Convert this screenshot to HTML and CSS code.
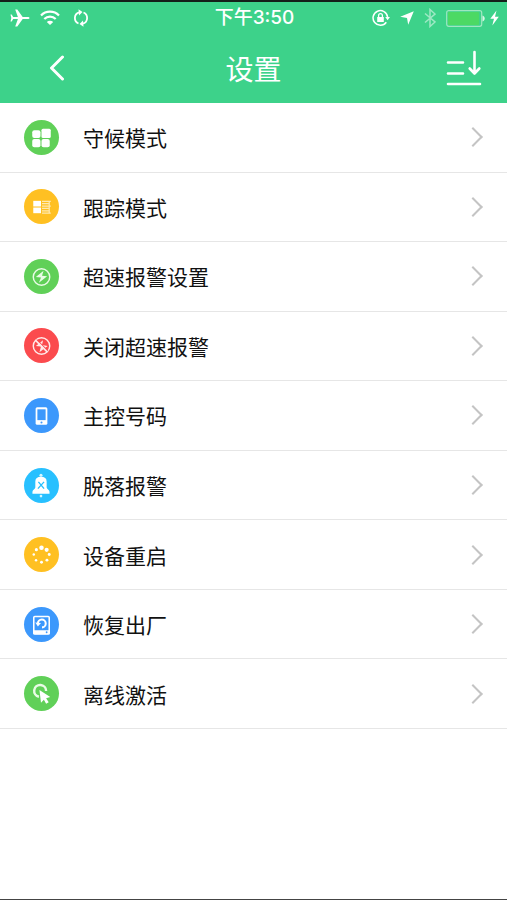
FILE: index.html
```html
<!DOCTYPE html>
<html lang="zh-CN">
<head>
  <meta charset="UTF-8" />
  <title>设置</title>
  <meta name="viewport" content="width=device-width, initial-scale=1.0"/>
  <link rel="stylesheet" href="styles.css">
</head>
<body>

<header class="header">
  <div class="status-bar">
    <div class="status-left">
      <!-- airplane -->
      <svg width="20" height="18" viewBox="0 0 20 18" fill="#fff"><path d="M19.500 9C19.500 8.200 18.700 8 17.800 8H12.700L7.300 .5H5.200L7.900 8H3.200L1.700 5.500H.5L1.300 9L.5 12.500H1.700L3.200 10H7.900L5.200 17.500H7.300L12.700 10H17.800C18.700 10 19.500 9.800 19.500 9Z"/></svg>
      <!-- wifi -->
      <svg width="20" height="16" viewBox="0 0 20 16" fill="none" stroke="#fff" stroke-width="2.200"><path d="M1 5.500A12.500 12.500 0 0 1 19 5.500"/><path d="M4.300 9A8 8 0 0 1 15.700 9"/><path d="M6.800 12A4.500 4.500 0 0 1 13.200 12L10 15Z" fill="#fff" stroke="none"/></svg>
      <!-- sync -->
      <svg class="sync" width="16" height="18" viewBox="0 0 16 18" fill="none" stroke="#fff" stroke-width="1.800"><path d="M6 3.300A6 6 0 0 0 5.500 14.500"/><path d="M10 14.700A6 6 0 0 0 10.500 3.500"/><path d="M5.500 .3L9.500 3L6 6.500ZM10.500 17.700L6.500 15L10 11.500Z" fill="#fff" stroke="none"/></svg>
    </div>
    <time class="clock">下午3:50</time>
    <div class="status-right">
      <!-- rotation lock -->
      <svg width="18" height="18" viewBox="0 0 18 18" fill="none" stroke="#fff" stroke-width="1.500"><path d="M15.600 8A7.300 7.300 0 1 0 14.300 13.200"/><path d="M13.200 8H18L15.600 11.300Z" fill="#fff" stroke="none"/><rect x="5.200" y="8" width="6.600" height="5" fill="#fff" stroke="none"/><path d="M6.600 8V6.600A1.900 1.900 0 0 1 10.400 6.600V8" stroke-width="1.300"/></svg>
      <!-- location -->
      <svg width="14" height="14" viewBox="0 0 14 14" fill="#fff"><path d="M13.800 .2L8.200 13.800L7 7L.2 5.800Z"/></svg>
      <!-- bluetooth -->
      <svg class="dim" width="12" height="20" viewBox="0 0 12 20" fill="none" stroke="#fff" stroke-width="1.500"><path d="M1 5.500L11 14L6 18.500V1.500L11 6L1 14.500"/></svg>
      <div class="power">
        <!-- battery -->
        <svg width="39" height="17" viewBox="0 0 39 17"><rect x=".7" y=".7" width="35" height="15.600" rx="2" fill="none" stroke="#9fe7c0" stroke-width="1.200"/><rect x="2" y="2" width="31" height="13" rx="1" fill="#4cd964"/><path d="M36.500 5.500C39.400 6.500 39.400 10.500 36.500 11.500Z" fill="#d8f6e5"/></svg>
        <!-- charging -->
        <svg width="9" height="16" viewBox="0 0 9 16" fill="#fff"><path d="M6.500 .5L.3 8.800H4L2.300 15.500L8.800 6.800H5Z"/></svg>
      </div>
    </div>
  </div>
  <div class="nav-bar">
    <button class="nav-button" aria-label="返回">
      <svg width="16" height="26" viewBox="0 0 16 26" fill="none" stroke="#fff" stroke-width="3" stroke-linecap="round" stroke-linejoin="round"><path d="M13.500 2L2.500 13L13.500 24"/></svg>
    </button>
    <h1 class="title">设置</h1>
    <button class="nav-button" aria-label="排序">
      <svg width="36" height="36" viewBox="0 0 36 36" fill="none" stroke="#fff" stroke-width="2.600" stroke-linecap="round" stroke-linejoin="round"><path d="M2 12.500H17M2 23.500H17M2 34H34"/><path d="M28.500 2V23M23.700 18.500L28.500 23.500L33.300 18.500"/></svg>
    </button>
  </div>
</header>

<main class="settings">
  <a class="row" href="#">
    <svg class="icon green" viewBox="0 0 34 34" fill="#fff"><rect x="8" y="10" width="8" height="7.500" rx="2"/><rect x="17" y="8.500" width="9" height="9" rx="1.500"/><rect x="8" y="18.500" width="8" height="8" rx="2"/><rect x="17" y="18.500" width="8" height="8" rx="2"/></svg>
    <span class="label">守候模式</span>
  </a>
  <a class="row" href="#">
    <svg class="icon yellow" viewBox="0 0 34 34" fill="#fff"><rect x="9" y="11.500" width="7.500" height="5.500"/><rect x="9" y="18" width="7.500" height="5.500"/><path d="M17.500 12H26M17.500 14.300H25M17.500 16.600H26M17.500 18.900H25M17.500 21.200H25M17.500 23.500H26M24.500 12V23" fill="none" stroke="#ffe9b0" stroke-width="1.200"/></svg>
    <span class="label">跟踪模式</span>
  </a>
  <a class="row" href="#">
    <svg class="icon green" viewBox="0 0 34 34"><circle cx="17" cy="17.500" r="8" fill="none" stroke="#e9fbe6" stroke-width="1.400"/><path d="M19 11.500L11.500 17.500L16.500 18L14.500 23L22.500 16.800L17.500 16.300Z" fill="#e9fbe6"/></svg>
    <span class="label">超速报警设置</span>
  </a>
  <a class="row" href="#">
    <svg class="icon red" viewBox="0 0 34 34"><circle cx="17" cy="17.500" r="8" fill="none" stroke="#ffe9e9" stroke-width="1.400"/><path d="M18.500 12L11.500 17.500L16.500 18L15 23.500L23 17.500L17.500 16.500Z" fill="#ffe9e9"/><path d="M12.300 11.200L23.300 22.200" stroke="#fb4b4e" stroke-width="1"/><path d="M11.300 12L22.500 23.200" stroke="#ffe9e9" stroke-width="1.600"/></svg>
    <span class="label">关闭超速报警</span>
  </a>
  <a class="row" href="#">
    <svg class="icon blue" viewBox="0 0 34 34"><rect x="11.300" y="9" width="11.400" height="17" rx="1.500" fill="#fff"/><rect x="13" y="11" width="8" height="10.500" fill="#3c98fc"/><circle cx="17" cy="23.800" r="1" fill="#3c98fc"/></svg>
    <span class="label">主控号码</span>
  </a>
  <a class="row" href="#">
    <svg class="icon cyan" viewBox="0 0 34 34"><circle cx="16.500" cy="7" r="1.500" fill="#d5f5ff"/><circle cx="16.500" cy="27.300" r="1.300" fill="#d5f5ff"/><path d="M11 19V13C11 10 13 8.500 16.500 8.500S22 10 22 13V19C22 20.500 24.800 21.500 24.800 23V25H8.200V23C8.200 21.500 11 20.500 11 19Z" fill="#fff"/><path d="M14 13.500L19.500 20M19.500 13.500L13.500 20" stroke="#28c0ff" stroke-width="1.300"/></svg>
    <span class="label">脱落报警</span>
  </a>
  <a class="row" href="#">
    <svg class="icon yellow" viewBox="0 0 34 34" fill="#fff"><circle cx="17" cy="10.500" r="2.200"/><circle cx="22" cy="12.500" r="2"/><circle cx="24.500" cy="17" r="1.400"/><circle cx="22.300" cy="22.500" r="1.400"/><circle cx="17" cy="24.500" r="1.400"/><circle cx="11.700" cy="22.500" r="1.200"/><circle cx="9.500" cy="17" r="1.200"/><circle cx="12" cy="12.300" r="1.500"/></svg>
    <span class="label">设备重启</span>
  </a>
  <a class="row" href="#">
    <svg class="icon blue" viewBox="0 0 34 34" fill="none"><rect x="9.500" y="9.200" width="15" height="17" rx="1" stroke="#fff" stroke-width="1.500"/><path d="M9 22.500H25V26.500H9Z" fill="#fff"/><path d="M13.500 16A3.800 3.800 0 1 1 17.500 19.800" stroke="#fff" stroke-width="2"/><path d="M11 15L16.500 15.500L13.500 19Z" fill="#fff"/><circle cx="22" cy="24.500" r=".9" fill="#3c98fc"/></svg>
    <span class="label">恢复出厂</span>
  </a>
  <a class="row" href="#">
    <svg class="icon green" viewBox="0 0 34 34" fill="none"><path d="M14.500 20.200A5.800 5.800 0 1 1 21.500 14.500" stroke="#e9fbe6" stroke-width="2.400"/><path d="M15 13.500L25.500 20.500L21.500 21.500L24 25.500L21.500 27L19.300 23L16.500 26Z" fill="#fff"/></svg>
    <span class="label">离线激活</span>
  </a>
</main>

</body>
</html>
```

FILE: styles.css
```css
body {
  margin: 0;
  min-height: 100vh;
  box-sizing: border-box;
  border-top: 2px solid #14201a;
  border-bottom: 1px solid #444;
  background: #fff;
  font-family: "Noto Sans CJK SC", sans-serif;
}

.header {
  background: #3dd28a;
  color: #fff;
}

.status-bar {
  display: grid;
  grid-template-columns: 1fr auto 1fr;
  align-items: center;
  height: 32px;
  padding: 0 8px 0 10px;
}

.status-left,
.status-right {
  display: flex;
  align-items: center;
  gap: 10px;
}

.status-left .sync {
  margin-left: 3px;
}

.status-right {
  justify-content: flex-end;
}

.power {
  display: flex;
  align-items: center;
  gap: 5px;
}

.dim {
  opacity: 0.5;
}

.clock {
  font: 500 19px/24px Inter, "Noto Sans CJK SC", sans-serif;
}

.nav-bar {
  display: grid;
  grid-template-columns: 1fr auto 1fr;
  align-items: center;
  padding: 14px 25px 15px 49px;
}

.nav-button {
  justify-self: start;
  display: flex;
  padding: 0;
  border: none;
  background: none;
  cursor: pointer;
}

.nav-button:last-child {
  justify-self: end;
}

.title {
  margin: 0 0 0 -24px;
  font-size: 28px;
  line-height: 40px;
  font-weight: 400;
}

.settings {
  display: grid;
  grid-template-columns: 1fr;
  grid-auto-rows: 1fr;
  min-height: 626px;
}

.row {
  display: flex;
  align-items: center;
  gap: 24px;
  padding: 0 25px 0 24px;
  border-bottom: 1px solid #e6e6e6;
  color: #111;
  text-decoration: none;
}

.row::after {
  content: "";
  width: 12px;
  height: 12px;
  margin-right: 2px;
  border: solid #c4c4c4;
  border-width: 2px 2px 0 0;
  transform: rotate(45deg);
}

.icon {
  width: 35px;
  height: 35px;
  border-radius: 50%;
}

.label {
  flex: 1;
  font-size: 21px;
  line-height: 30px;
}

.green {
  background: #60d058;
}

.yellow {
  background: #ffc022;
}

.red {
  background: #fb4b4e;
}

.blue {
  background: #3c98fc;
}

.cyan {
  background: #28c0ff;
}
```
